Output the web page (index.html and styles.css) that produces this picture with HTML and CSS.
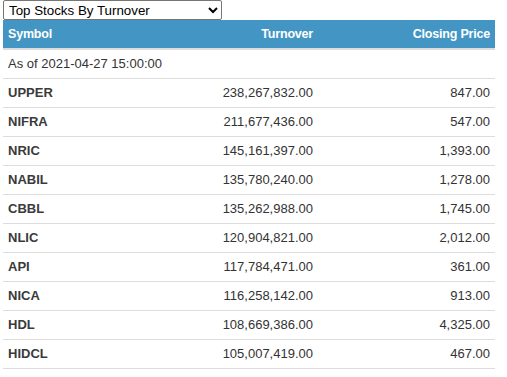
FILE: index.html
```html
<!DOCTYPE html>
<html>
<head>
<meta charset="utf-8">
<link rel="stylesheet" href="styles.css">
</head>
<body>
<div class="wrap">
  <select class="picker">
    <option>Top Stocks By Turnover</option>
  </select>
  <table class="stocks">
    <thead>
      <tr><th class="sym">Symbol</th><th class="num">Turnover</th><th class="num price">Closing Price</th></tr>
    </thead>
    <tbody>
      <tr><td colspan="3">As of 2021-04-27 15:00:00</td></tr>
      <tr><td class="sym">UPPER</td><td class="num">238,267,832.00</td><td class="num">847.00</td></tr>
      <tr><td class="sym">NIFRA</td><td class="num">211,677,436.00</td><td class="num">547.00</td></tr>
      <tr><td class="sym">NRIC</td><td class="num">145,161,397.00</td><td class="num">1,393.00</td></tr>
      <tr><td class="sym">NABIL</td><td class="num">135,780,240.00</td><td class="num">1,278.00</td></tr>
      <tr><td class="sym">CBBL</td><td class="num">135,262,988.00</td><td class="num">1,745.00</td></tr>
      <tr><td class="sym">NLIC</td><td class="num">120,904,821.00</td><td class="num">2,012.00</td></tr>
      <tr><td class="sym">API</td><td class="num">117,784,471.00</td><td class="num">361.00</td></tr>
      <tr><td class="sym">NICA</td><td class="num">116,258,142.00</td><td class="num">913.00</td></tr>
      <tr><td class="sym">HDL</td><td class="num">108,669,386.00</td><td class="num">4,325.00</td></tr>
      <tr><td class="sym">HIDCL</td><td class="num">105,007,419.00</td><td class="num">467.00</td></tr>
    </tbody>
  </table>
</div>
</body>
</html>
```
FILE: styles.css
```css
html, body {
  margin: 0;
  padding: 0;
  background: #fff;
}
.wrap {
  padding: 0 12px 0 3px;
  font-family: "Liberation Sans", Arial, sans-serif;
  font-size: 13px;
  color: #333;
}
.picker {
  display: block;
  width: 219px;
  height: 20px;
  margin: 0;
  font-family: "Liberation Sans", Arial, sans-serif;
  font-size: 13.33px;
  color: #000;
  background: #fff;
  border: 1px solid #767676;
  border-radius: 2px;
  padding: 0 0 0 1px;
}
.stocks {
  width: 492px;
  border-collapse: collapse;
  border-spacing: 0;
}
.stocks th {
  background: #4396c4;
  color: #fff;
  font-weight: bold;
  font-size: 12.5px;
  letter-spacing: -0.2px;
  height: 18px;
  line-height: 18px;
  padding: 5px 5px;
  border-bottom: 2px solid #ddd;
  text-align: left;
}
.stocks td {
  line-height: 18px;
  padding: 5px 5px;
  border-bottom: 1px solid #ddd;
  text-align: left;
}
.stocks td.sym {
  font-weight: bold;
  color: #3a3a3a;
}
.stocks .num {
  text-align: right;
}
.stocks .price {
  width: 167px;
}
```
